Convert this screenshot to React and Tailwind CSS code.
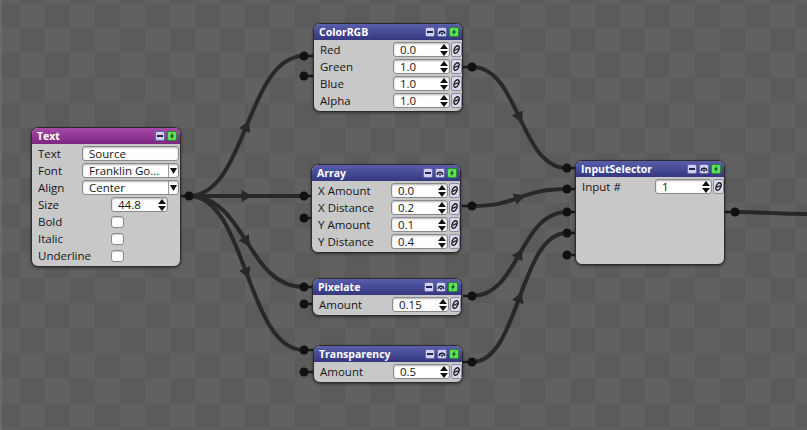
import React from "react";

// wires: [x1, y1, x2, y2, arrow?]
const wires = [
  [189, 196, 304, 56, true],
  [189, 196, 304, 196, true],
  [189, 196, 304, 287, true],
  [189, 196, 304, 350, true],
  [472, 67, 567, 168, true],
  [472, 206, 567, 189, true],
  [472, 296, 567, 212, true],
  [472, 362, 567, 233, true],
  [735, 212, 807, 214, false],
];

// port dots with a stub to the node edge: [x, y, edgeX]
const ports = [
  [189, 196, 181],
  [304, 56, 313], [304, 76, 313], [472, 67, 462],
  [304, 196, 311], [304, 218, 311], [472, 206, 462],
  [304, 287, 312], [304, 304, 312], [472, 296, 463],
  [304, 350, 314], [304, 372, 314], [472, 362, 463],
  [567, 168, 575], [567, 189, 575], [567, 212, 575], [567, 233, 575], [567, 255, 575],
  [735, 212, 725],
];

const ctrl = (x1, y1, x2, y2) => {
  const d = Math.max(28, (x2 - x1) / 2);
  return [[x1, y1], [x1 + d, y1], [x2 - d, y2], [x2, y2]];
};

const wirePath = (w) => {
  const [p0, p1, p2, p3] = ctrl(w[0], w[1], w[2], w[3]);
  return `M${p0[0]},${p0[1]} C${p1[0]},${p1[1]} ${p2[0]},${p2[1]} ${p3[0]},${p3[1]}`;
};

const arrowPoints = (w) => {
  const [p0, p1, p2, p3] = ctrl(w[0], w[1], w[2], w[3]);
  const mx = (p0[0] + 3 * p1[0] + 3 * p2[0] + p3[0]) / 8;
  const my = (p0[1] + 3 * p1[1] + 3 * p2[1] + p3[1]) / 8;
  let dx = 0.75 * (p1[0] - p0[0]) + 1.5 * (p2[0] - p1[0]) + 0.75 * (p3[0] - p2[0]);
  let dy = 0.75 * (p1[1] - p0[1]) + 1.5 * (p2[1] - p1[1]) + 0.75 * (p3[1] - p2[1]);
  const len = Math.hypot(dx, dy) || 1;
  dx /= len;
  dy /= len;
  const nx = -dy, ny = dx;
  const tip = [mx + dx * 6, my + dy * 6];
  const a = [mx - dx * 5 + nx * 6, my - dy * 5 + ny * 6];
  const b = [mx - dx * 5 - nx * 6, my - dy * 5 - ny * 6];
  return `${tip[0]},${tip[1]} ${a[0]},${a[1]} ${b[0]},${b[1]}`;
};

const Spinner = () => (
  <svg width="8" height="12" viewBox="0 0 8 12">
    <path d="M4 0 L8 5 H0 Z" fill="#111" />
    <path d="M0 7 H8 L4 12 Z" fill="#111" />
  </svg>
);

const LinkBtn = () => (
  <div className="ml-[1px] flex h-[15px] w-[11px] items-center justify-center rounded-[2px] border border-[#8e8ea0] bg-[#d8d8e8]">
    <svg width="7" height="11" viewBox="0 0 7 11">
      <ellipse cx="3.5" cy="5.5" rx="2.2" ry="4" transform="rotate(25 3.5 5.5)" fill="none" stroke="#111" strokeWidth="1.3" />
      <path d="M1.5 6.5 L5.5 4.5" stroke="#111" strokeWidth="1.3" />
    </svg>
  </div>
);

const NumField = ({ value }) => (
  <div className="flex h-[15px] w-[57px] items-center justify-between rounded-[3px] border border-[#8a8a8a] bg-white pl-[6px] pr-[1px] shadow-[inset_0_1px_2px_rgba(0,0,0,0.3)]">
    <span className="leading-none">{value}</span>
    <Spinner />
  </div>
);

const MinusBtn = () => (
  <div className="flex h-[10px] w-[10px] items-center justify-center rounded-[2px] border border-[#6a6aa6] bg-[#d0d0f4]">
    <div className="h-[2px] w-[6px] bg-[#24244a]" />
  </div>
);

const EyeBtn = () => (
  <div className="flex h-[10px] w-[10px] items-center justify-center rounded-[2px] border border-[#6a6aa6] bg-[#d0d0f4]">
    <svg width="8" height="8" viewBox="0 0 8 8">
      <path d="M1.3 6 A2.7 2.7 0 0 1 6.7 6" fill="none" stroke="#1c1c3a" strokeWidth="1.5" />
      <circle cx="4" cy="5.7" r="1" fill="#1c1c3a" />
    </svg>
  </div>
);

const BoltBtn = () => (
  <div className="flex h-[10px] w-[10px] items-center justify-center rounded-[2px] border border-[#2b8a2b] bg-[#5be35b]">
    <svg width="8" height="8" viewBox="0 0 8 8">
      <path d="M5.2 0.5 L2 4.4 H3.9 L2.8 7.5 L6 3.6 H4.1 Z" fill="#103010" />
    </svg>
  </div>
);

const Node = ({ className, title, purple, simple, children }) => (
  <div
    className={`absolute flex w-[150px] flex-col overflow-hidden rounded-[7px] border border-[#2a2a2a] bg-[#c8c8c8] font-['Open_Sans',sans-serif] text-[11.5px] text-[#151515] shadow-[0_1px_3px_rgba(0,0,0,0.45)] ${className}`}
  >
    <div
      className={`flex h-[16px] shrink-0 items-center justify-between pl-[5px] pr-[3px] ${
        purple
          ? "bg-gradient-to-b from-[#a64aa8] to-[#7c2680]"
          : "bg-gradient-to-b from-[#5a5eab] to-[#35377f]"
      }`}
    >
      <span className="text-[10.5px] font-bold leading-none text-white">{title}</span>
      <div className="flex items-center gap-[2px]">
        <MinusBtn />
        {!simple && <EyeBtn />}
        <BoltBtn />
      </div>
    </div>
    <div className="pt-[1px] pb-[2px]">{children}</div>
  </div>
);

const Row = ({ label, labelW = "w-[73px]", children }) => (
  <div className="flex h-[17px] items-center pl-[6px]">
    <span className={`${labelW} shrink-0 whitespace-nowrap leading-none`}>{label}</span>
    {children}
  </div>
);

const ParamRow = ({ label, value }) => (
  <Row label={label}>
    <NumField value={value} />
    <LinkBtn />
  </Row>
);

const TextField = ({ value, dropdown }) => (
  <div className="flex h-[15px] w-[97px] items-center justify-between rounded-[3px] border border-[#8a8a8a] bg-white pl-[6px] shadow-[inset_0_1px_2px_rgba(0,0,0,0.3)]">
    <span className="whitespace-nowrap leading-none">{value}</span>
    {dropdown && (
      <div className="flex h-full w-[10px] items-center justify-center border-l border-[#9a9a9a]">
        <svg width="7" height="6" viewBox="0 0 7 6">
          <path d="M0 0 H7 L3.5 6 Z" fill="#111" />
        </svg>
      </div>
    )}
  </div>
);

const Check = () => (
  <div className="h-[12px] w-[13px] rounded-[3px] border border-[#8a8a8a] bg-white shadow-[inset_0_1px_1px_rgba(0,0,0,0.2)]" />
);

export default function App() {
  return (
    <div className="relative h-[430px] w-[807px] overflow-hidden bg-[#5c5c5c] bg-[repeating-conic-gradient(#5b5b5b_0_25%,#616161_0_50%)] bg-[length:50px_50px] bg-[position:20px_3px] shadow-[inset_2px_0_0_#6b6b6b]">
      <svg className="absolute inset-0" width="807" height="430">
        {wires.map((w, i) => (
          <path key={i} d={wirePath(w)} fill="none" stroke="#282828" strokeWidth="4" />
        ))}
        {wires.filter((w) => w[4]).map((w, i) => (
          <polygon key={i} points={arrowPoints(w)} fill="#282828" />
        ))}
        {ports.map(([x, y, e], i) => (
          <g key={i}>
            <line x1={x} y1={y} x2={e} y2={y} stroke="#1a1a1a" strokeWidth="2.5" />
            <circle cx={x} cy={y} r="4.5" fill="#111" />
          </g>
        ))}
      </svg>

      <Node className="left-[31px] top-[127px]" title="Text" purple simple>
        <Row label="Text" labelW="w-[44px]">
          <TextField value="Source" />
        </Row>
        <Row label="Font" labelW="w-[44px]">
          <TextField value="Franklin Go..." dropdown />
        </Row>
        <Row label="Align" labelW="w-[44px]">
          <TextField value="Center" dropdown />
        </Row>
        <Row label="Size">
          <NumField value="44.8" />
        </Row>
        <Row label="Bold">
          <Check />
        </Row>
        <Row label="Italic">
          <Check />
        </Row>
        <Row label="Underline">
          <Check />
        </Row>
      </Node>

      <Node className="left-[313px] top-[23px]" title="ColorRGB">
        <ParamRow label="Red" value="0.0" />
        <ParamRow label="Green" value="1.0" />
        <ParamRow label="Blue" value="1.0" />
        <ParamRow label="Alpha" value="1.0" />
      </Node>

      <Node className="left-[311px] top-[164px]" title="Array">
        <ParamRow label="X Amount" value="0.0" />
        <ParamRow label="X Distance" value="0.2" />
        <ParamRow label="Y Amount" value="0.1" />
        <ParamRow label="Y Distance" value="0.4" />
      </Node>

      <Node className="left-[312px] top-[278px]" title="Pixelate">
        <ParamRow label="Amount" value="0.15" />
      </Node>

      <Node className="left-[313px] top-[345px]" title="Transparency">
        <ParamRow label="Amount" value="0.5" />
      </Node>

      <Node className="left-[575px] top-[160px] h-[105px]" title="InputSelector">
        <ParamRow label="Input #" value="1" />
      </Node>
    </div>
  );
}
